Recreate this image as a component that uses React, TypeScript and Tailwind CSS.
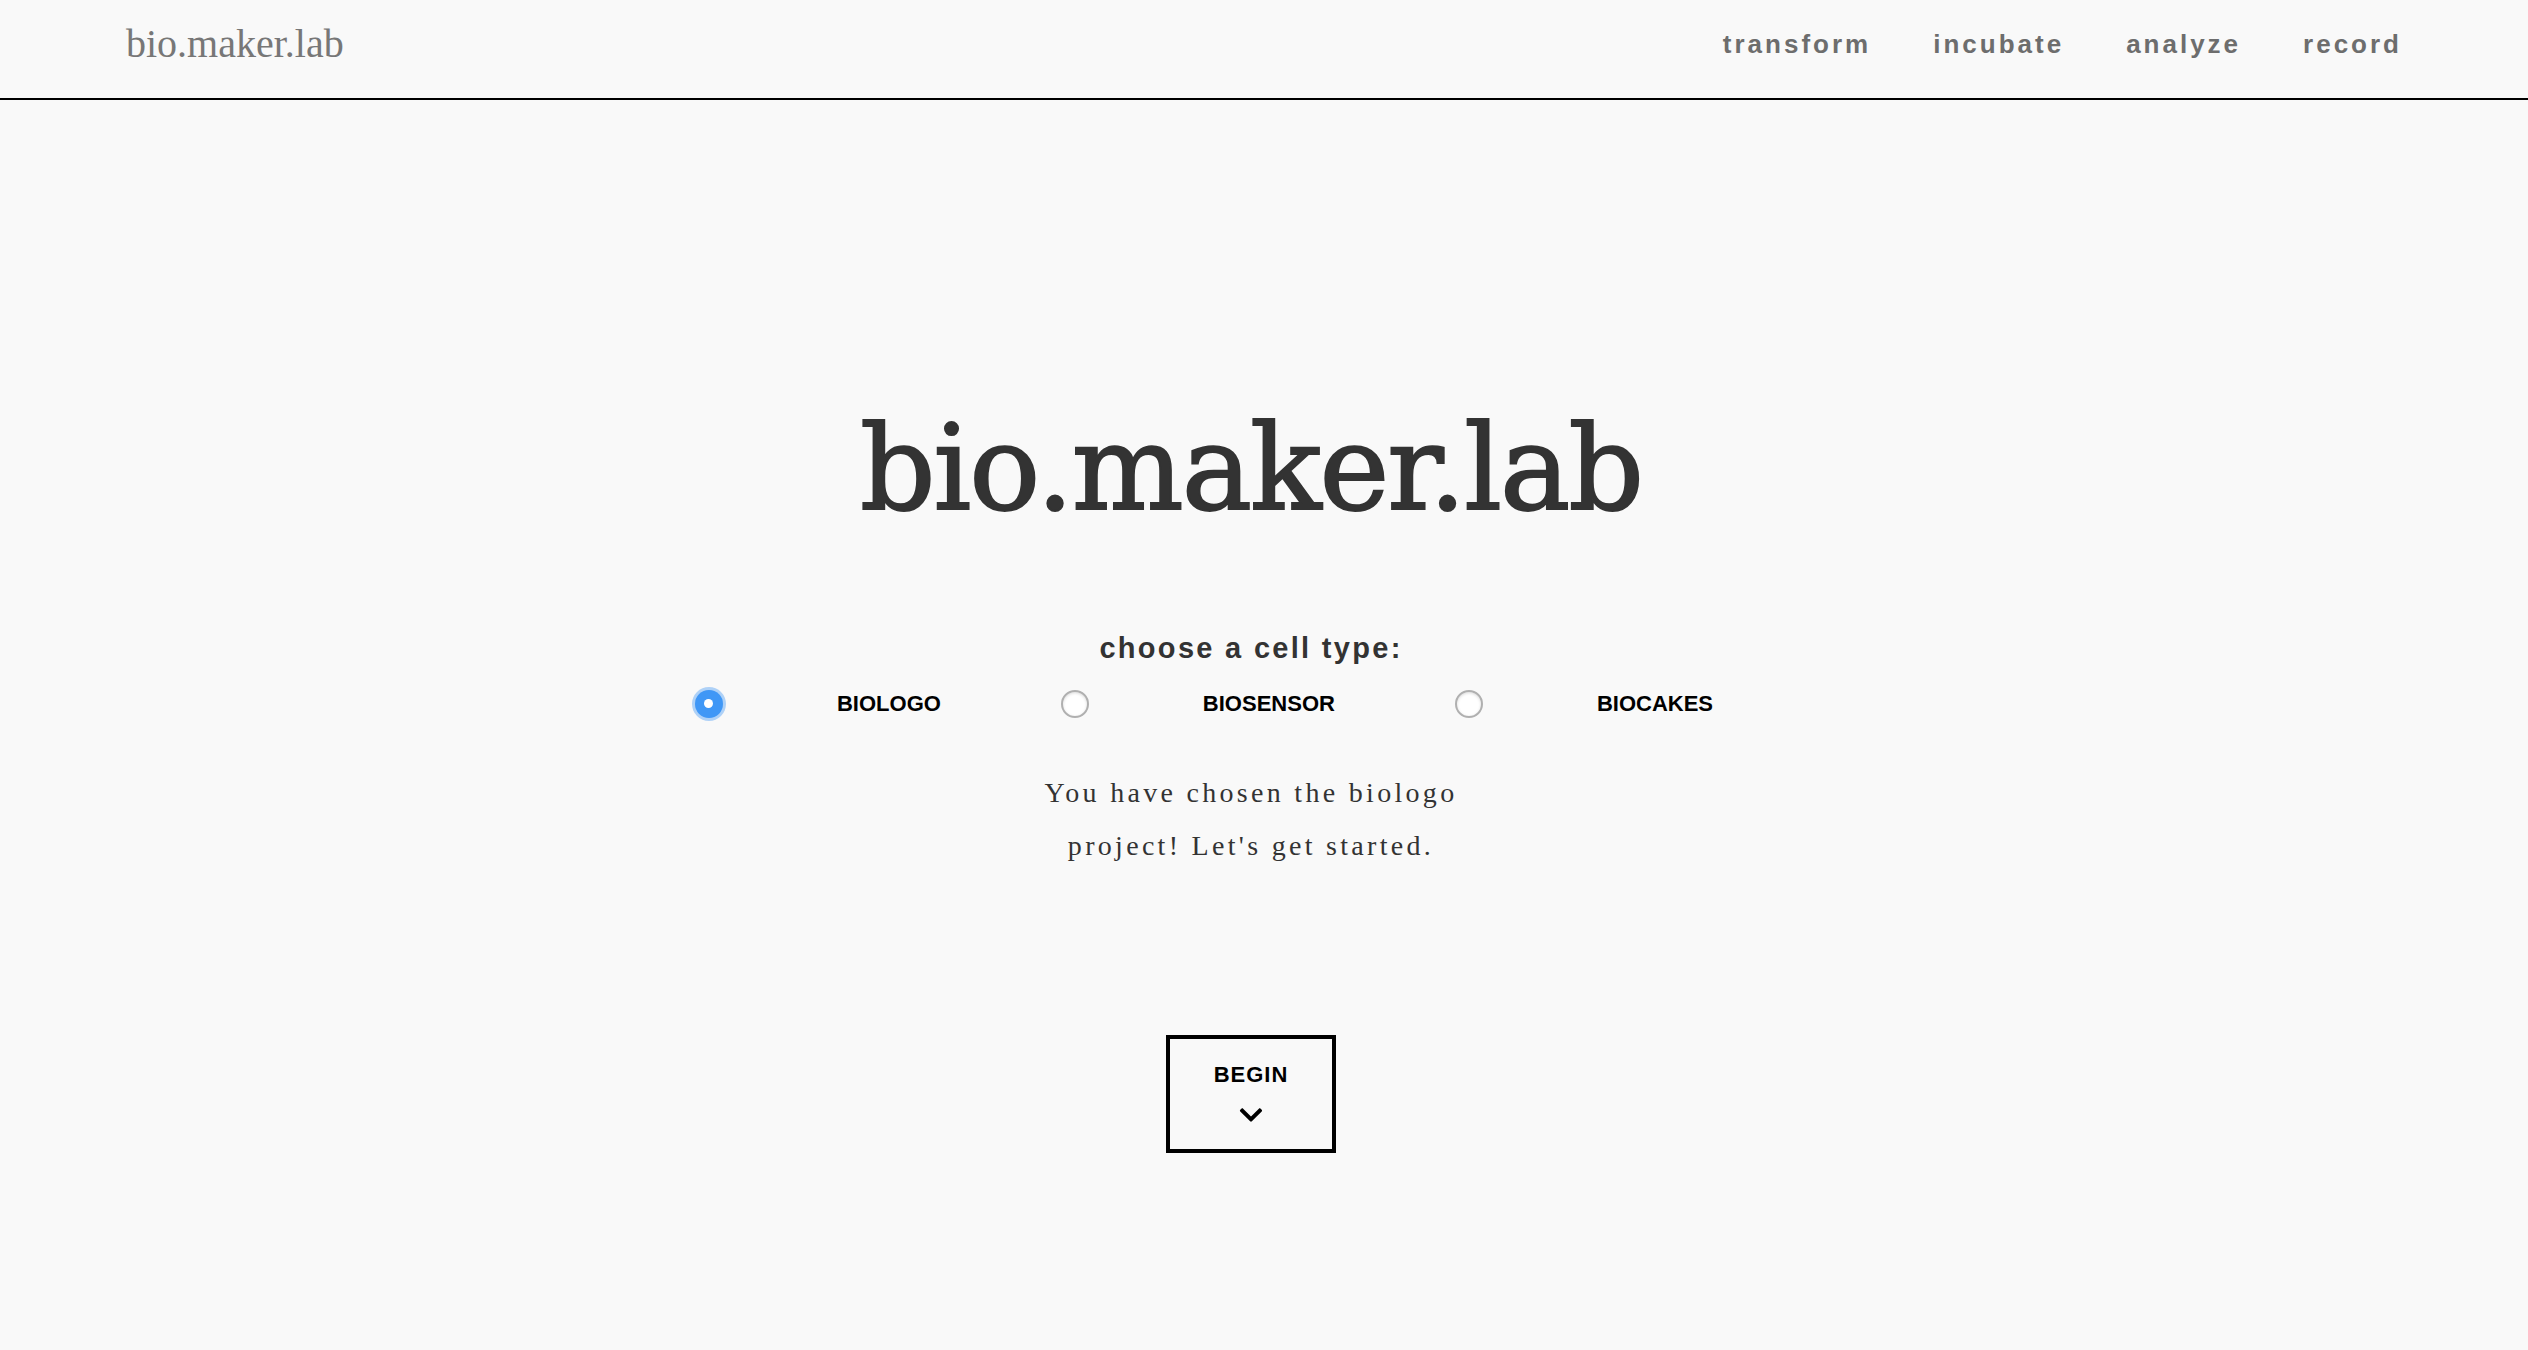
import { useState } from "react";
import { FaChevronDown } from "react-icons/fa";

const cellTypes = ["biologo", "biosensor", "biocakes"];
const navLinks = ["transform", "incubate", "analyze", "record"];

const serif = "font-['Liberation_Serif','Times_New_Roman',serif]";
const sans = "font-['Liberation_Sans',Arial,sans-serif]";

const App = () => {
  const [cellType, setCellType] = useState("biologo");

  return (
    <div className="min-h-screen bg-[#f9f9f9] text-[#333]">
      <header className="flex h-[100px] items-center justify-between border-b-2 border-black px-[126px] pb-[10px]">
        <a href="#" className={`${serif} text-[40px] leading-none text-[#777]`}>
          bio.maker.lab
        </a>
        <nav className={`${sans} flex gap-[62px]`}>
          {navLinks.map((link) => (
            <a
              key={link}
              href="#"
              className="text-[26px] font-bold leading-none tracking-[3px] text-[#6d6d6d]"
            >
              {link}
            </a>
          ))}
        </nav>
      </header>

      <main className="flex flex-col items-center pr-[26px]">
        <h1 className="mt-[309px] font-['DejaVu_Serif',serif] text-[118px] leading-none tracking-[-2px] text-[#333] [-webkit-text-stroke:2px_#333]">
          bio.maker.lab
        </h1>

        <p className={`${sans} mt-[104px] text-[29px] font-bold leading-[1.2] tracking-[2.3px] text-[#333]`}>
          choose a cell type:
        </p>

        {/* row carries its own trailing margin, so undo main's offset */}
        <div className={`${sans} ml-[26px] mt-[21px] flex h-[34px] items-center`}>
          {cellTypes.map((type) => {
            const checked = cellType === type;
            return (
              <label
                key={type}
                className="mr-[120px] flex cursor-pointer items-center"
                onClick={() => setCellType(type)}
              >
                {checked ? (
                  <span className="flex h-[28px] w-[28px] items-center justify-center rounded-full bg-[#3f97f6] shadow-[0_0_0_3px_rgba(63,151,246,0.4)]">
                    <span className="h-[9px] w-[9px] rounded-full bg-white" />
                  </span>
                ) : (
                  <span className="h-[28px] w-[28px] rounded-full border-2 border-[#b0b0b0] bg-white shadow-[inset_0_1px_3px_rgba(0,0,0,0.15)]" />
                )}
                <span className="ml-[114px] text-[22px] font-bold uppercase leading-none text-black">
                  {type}
                </span>
              </label>
            );
          })}
        </div>

        <p className={`${serif} mt-[45px] w-[440px] text-center text-[28px] leading-[53px] tracking-[3.3px] text-[#333]`}>
          You have chosen the {cellType} project! Let's get started.
        </p>

        <button
          className={`${sans} mt-[163px] flex h-[118px] w-[170px] flex-col items-center border-4 border-black pt-[25px] text-black`}
        >
          <span className="text-[22px] font-bold leading-none tracking-[1px]">BEGIN</span>
          <FaChevronDown className="mt-[16px] h-[26px] w-[26px]" />
        </button>
      </main>
    </div>
  );
};

export default App;
